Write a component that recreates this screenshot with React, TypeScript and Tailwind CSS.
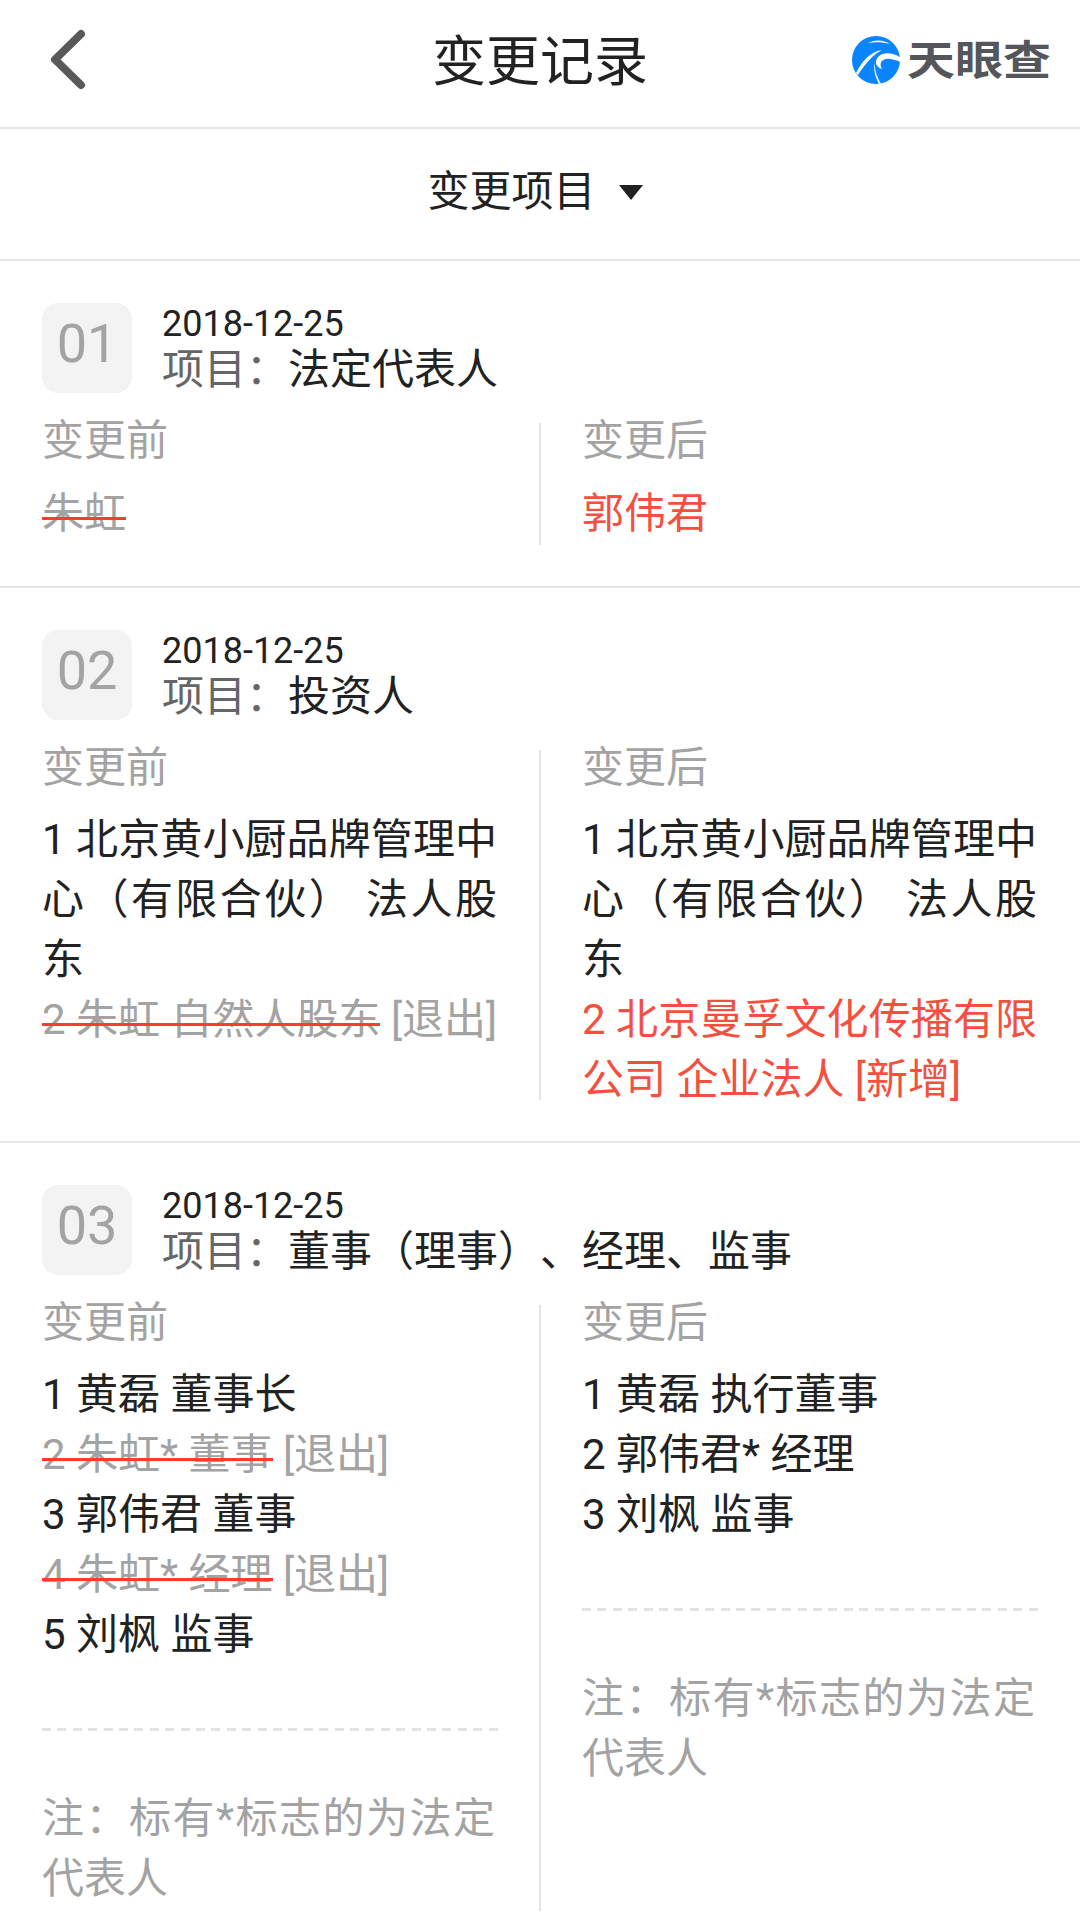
const FONT = "font-['Roboto','Noto_Sans_CJK_SC',sans-serif] [text-spacing-trim:space-all]"

type Line = { text: string; removed?: string; added?: boolean }

interface ChangeCardProps {
  no: string
  title: string
  before: Line[]
  after: Line[]
  note?: boolean
  single?: boolean
}

const ChangeLine = ({ line }: { line: Line }) => {
  if (line.removed) {
    return (
      <div className="text-[#a3a3a3]">
        <span className="relative inline-block">
          {line.removed}
          <span className="absolute inset-x-0 top-[33px] h-[3px] bg-[#ff3a30]" />
        </span>{' '}
        {line.text}
      </div>
    )
  }
  return <div className={`pr-[1px] text-justify ${line.added ? 'text-[#f5503f]' : 'text-[#222222]'}`}>{line.text}</div>
}

const Note = () => (
  <div className="mt-[73px] pb-[2px] text-[#a3a3a3]">
    <div className="mb-[58px] h-[3px] bg-[repeating-linear-gradient(90deg,#e3e3e3_0,#e3e3e3_9px,transparent_9px,transparent_15.4px)]" />
    <div className="pr-[3px] text-justify">{'注\uFF1A标有*标志的为法定代表人'}</div>
  </div>
)

const Column = ({ label, lines, note, single }: { label: string; lines: Line[]; note?: boolean; single?: boolean }) => (
  <div className="min-h-[122px] min-w-0 flex-1 text-[42px] leading-[60px]">
    <div className={`h-[36px] leading-[36px] text-[#a3a3a3] ${single ? 'mb-[25px]' : 'mb-[24px]'}`}>{label}</div>
    <div className="mb-[-10px]">
      {lines.map((line, i) => (
        <ChangeLine key={i} line={line} />
      ))}
    </div>
    {note && <Note />}
  </div>
)

const ChangeCard = ({ no, title, before, after, note, single }: ChangeCardProps) => (
  <div className={`px-[42px] pt-[42px] ${note ? '' : 'border-b-2 border-[#e5e5e5] pb-[41px]'}`}>
    <div className="flex items-center">
      <div className="flex size-[90px] shrink-0 items-center justify-center rounded-[16px] bg-[#f3f3f3] pb-[9px] text-[54px] text-[#a3a3a3]">
        {no}
      </div>
      <div className="ml-[30px]">
        <div className="text-[36px] leading-[42px] text-[#222222]">2018-12-25</div>
        <div className="pt-[2px] text-[42px] leading-[46px] text-[#222222]">
          <span className="text-[#666666]">{'项目\uFF1A'}</span>
          {title}
        </div>
      </div>
    </div>
    <div className="mt-[30px] flex">
      <div className="w-[456px] shrink-0">
        <Column label="变更前" lines={before} note={note} single={single} />
      </div>
      <div className="ml-[41px] mr-[41px] w-[2px] shrink-0 bg-[#e5e5e5]" />
      <Column label="变更后" lines={after} note={note} single={single} />
    </div>
  </div>
)

const Logo = () => (
  <div className="flex items-start">
    <svg width="48" height="48" viewBox="0 0 48 48">
      <circle cx="24" cy="24" r="24" fill="#0a84ff" />
      <path d="M16 7 C24 3 32 4 38 8 C31 6 23 6 16 7Z" fill="#fff" />
      <path d="M4 37 C10 25 18 16 30 14 C22 18 14 26 6 39Z" fill="#fff" />
      <path d="M49 22 C42 17 32 15 26 21 C22 26 24 31 30 33 C27 28 29 24 34 23 C38 22 43 24 49 26Z" fill="#fff" />
      <path d="M23 26 C22 33 25 41 29 48 L27 48 C23 40 21 33 23 26Z" fill="#fff" />
    </svg>
    <div className="ml-[7px] mt-[2px] origin-top scale-y-[0.85] text-[48px] leading-[56px] font-bold whitespace-nowrap text-[#55565b]">
      天眼查
    </div>
  </div>
)

export default function App() {
  return (
    <div className={`h-[1919px] w-[1080px] overflow-hidden bg-white ${FONT}`}>
      {/* Header */}
      <div className="relative flex h-[129px] items-center justify-center border-b-2 border-[#e5e5e5] pb-[3px]">
        <svg className="absolute left-[40px] top-[20px]" width="60" height="80" viewBox="0 0 60 80">
          <path d="M41 14 L15 39.5 L41 65" fill="none" stroke="#595959" strokeWidth="8" strokeLinecap="round" strokeLinejoin="round" />
        </svg>
        <div className="text-[54px] text-[#222222]">变更记录</div>
        <div className="absolute left-[852px] top-[36px]">
          <Logo />
        </div>
      </div>

      {/* Filter */}
      <div className="flex h-[132px] items-center justify-center border-b-2 border-[#e5e5e5] pb-[5px] pr-[10px] text-[42px] text-[#222222]">
        变更项目
        <span className="ml-[23px] mt-[2px] h-0 w-0 border-x-[12px] border-t-[15px] border-x-transparent border-t-[#222222]" />
      </div>

      <ChangeCard
        no="01"
        title="法定代表人"
        before={[{ text: '', removed: '朱虹' }]}
        after={[{ text: '郭伟君', added: true }]}
        single
      />
      <ChangeCard
        no="02"
        title="投资人"
        before={[
          { text: '1 北京黄小厨品牌管理中心\uFF08有限合伙\uFF09 法人股东' },
          { text: '[退出]', removed: '2 朱虹 自然人股东' },
        ]}
        after={[
          { text: '1 北京黄小厨品牌管理中心\uFF08有限合伙\uFF09 法人股东' },
          { text: '2 北京曼孚文化传播有限公司 企业法人 [新增]', added: true },
        ]}
      />
      <ChangeCard
        no="03"
        title={'董事\uFF08理事\uFF09\u3001经理\u3001监事'}
        before={[
          { text: '1 黄磊 董事长' },
          { text: '[退出]', removed: '2 朱虹* 董事' },
          { text: '3 郭伟君 董事' },
          { text: '[退出]', removed: '4 朱虹* 经理' },
          { text: '5 刘枫 监事' },
        ]}
        after={[
          { text: '1 黄磊 执行董事' },
          { text: '2 郭伟君* 经理' },
          { text: '3 刘枫 监事' },
        ]}
        note
      />
    </div>
  )
}
